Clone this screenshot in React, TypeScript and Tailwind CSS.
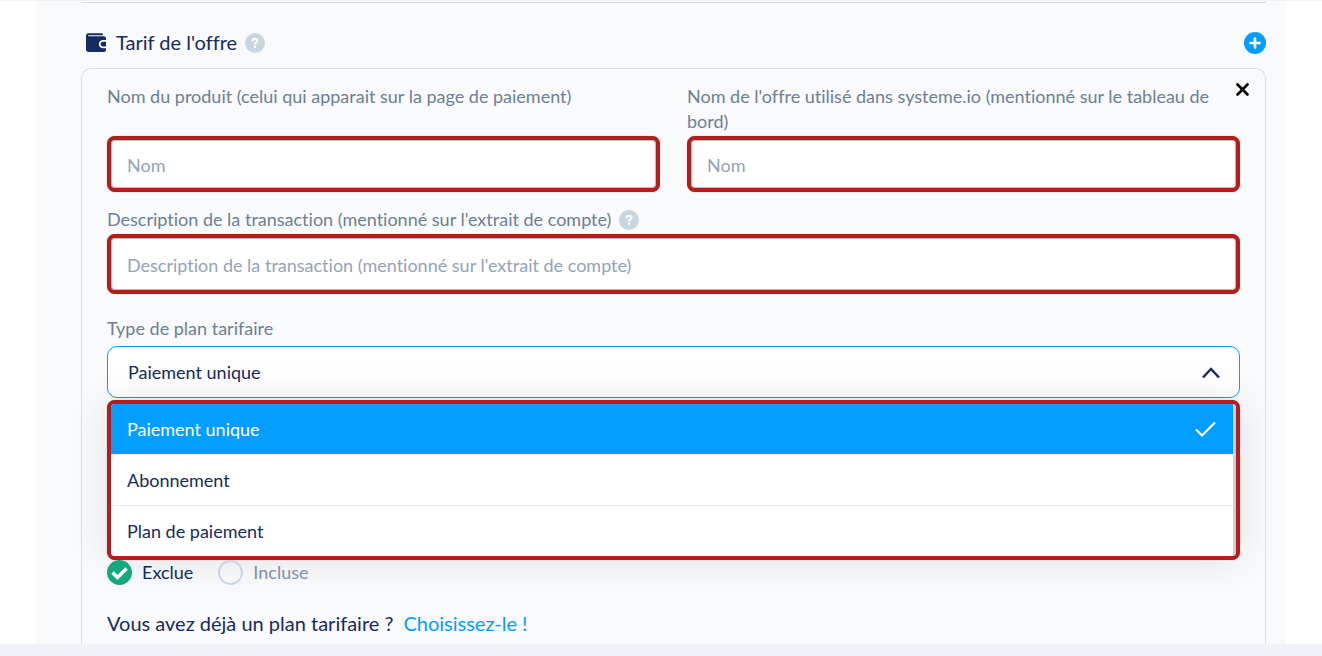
import React from 'react';

interface FieldProps {
  id: string;
  label: string;
  placeholder: string;
  help?: boolean;
  tall?: boolean;
}

const planTypes = ['Paiement unique', 'Abonnement', 'Plan de paiement'];

const HelpIcon: React.FC = () => (
  <button
    type="button"
    aria-label="Aide"
    className="flex size-5 shrink-0 items-center justify-center rounded-full bg-[#cad5e2] text-white"
  >
    <svg viewBox="0 0 20 20" className="size-5" fill="none" stroke="currentColor" strokeWidth="2.2">
      <path d="M7.5 8.1C7.6 6.5 8.6 5.9 10 5.9C11.5 5.9 12.4 6.7 12.4 7.8C12.4 9.4 10 9.3 10 11.4" />
      <circle cx="10" cy="13.8" r="1.3" fill="currentColor" stroke="none" />
    </svg>
  </button>
);

const WalletIcon: React.FC = () => (
  <svg viewBox="0 0 20 19" className="h-[19px] w-5 shrink-0" aria-hidden="true">
    <path
      fill="#152b61"
      d="M2.6.3H15.8C16.6.3 17 .9 17 1.8V2.2H2.2V3.3H17.6C19.2 3.3 20 4 20 5.4V7H17.2C14.6 7 12.8 8.7 12.8 11.1C12.8 13.6 14.6 15.3 17.2 15.3H20V16.8C20 18.2 19.2 18.9 17.6 18.9H2.6C1 18.9 0 18 0 16.4V3C0 1.3 1 .3 2.6.3Z"
    />
    <path fill="#152b61" d="M20 8.8H17.2C15.6 8.8 14.6 9.7 14.6 11.1C14.6 12.6 15.6 13.5 17.2 13.5H20Z" />
  </svg>
);

const Field: React.FC<FieldProps> = ({ id, label, placeholder, help = false, tall = false }) => (
  <div className="flex flex-col justify-between gap-0.5">
    <div className="flex items-center gap-2">
      <label htmlFor={id}>{label}</label>
      {help && <HelpIcon />}
    </div>
    <input
      type="text"
      id={id}
      placeholder={placeholder}
      className={`w-full rounded-lg border-4 border-[#b71c1c] bg-white px-4 pt-0.5 text-[#152b61] shadow-[0_0_1px_rgba(70,80,90,0.8),inset_0_0_1px_1px_rgba(70,80,90,0.4)] placeholder:text-[#94a3b8] focus:outline-none ${
        tall ? 'h-15' : 'h-14'
      }`}
    />
  </div>
);

const App: React.FC = () => {
  const [planType, setPlanType] = React.useState('Paiement unique');
  const [menuOpen, setMenuOpen] = React.useState(true);
  const [tax, setTax] = React.useState('Exclue');

  const toggleMenu = (e: React.MouseEvent) => {
    e.preventDefault();
    setMenuOpen((prev) => !prev);
  };

  const selectPlan = (plan: string) => {
    setPlanType(plan);
    setMenuOpen(false);
  };

  return (
    <div className="min-h-screen bg-[#eff3f8] pt-px pb-3 font-['Lato',sans-serif] text-lg leading-[25px] text-[#6b7f99] [font-variant-ligatures:none]">
      <main className="bg-white px-9">
        <div className="bg-[#f9fafc] pt-px pr-5 pl-[45px]">
          {/* Section header */}
          <header className="flex h-[66px] items-center justify-between border-t border-[#d5dce5] pt-3.5">
            <div className="flex items-center gap-2 pl-[5px]">
              <WalletIcon />
              <h2 className="pl-0.5 text-xl leading-[25px] text-[#152b61]">Tarif de l'offre</h2>
              <HelpIcon />
            </div>
            <button
              type="button"
              aria-label="Ajouter un tarif"
              className="flex size-[22px] items-center justify-center rounded-full bg-[#009fff] text-white"
            >
              <svg viewBox="0 0 22 22" className="size-[22px]" stroke="currentColor" strokeWidth="2.6" strokeLinecap="round">
                <path d="M11 6.5V15.5M6.5 11H15.5" />
              </svg>
            </button>
          </header>

          {/* Price plan card */}
          <section className="relative rounded-t-[10px] border border-b-0 border-[#d9dee4] px-[25px] pt-[15px] pb-2">
            <button type="button" aria-label="Supprimer" className="absolute top-3.5 right-4 text-black">
              <svg viewBox="0 0 13 13" className="size-[13px]" stroke="currentColor" strokeWidth="2.6" strokeLinecap="round">
                <path d="M1.5 1.5L11.5 11.5M11.5 1.5L1.5 11.5" />
              </svg>
            </button>

            <div className="grid grid-cols-2 gap-[27px]">
              <Field
                id="productName"
                label="Nom du produit (celui qui apparait sur la page de paiement)"
                placeholder="Nom"
              />
              <Field
                id="offerName"
                label="Nom de l'offre utilisé dans systeme.io (mentionné sur le tableau de bord)"
                placeholder="Nom"
              />
            </div>

            <div className="mt-[15px]">
              <Field
                id="description"
                label="Description de la transaction (mentionné sur l'extrait de compte)"
                placeholder="Description de la transaction (mentionné sur l'extrait de compte)"
                help
                tall
              />
            </div>

            {/* Plan type */}
            <div className="mt-[22px]">
              <label htmlFor="planType">Type de plan tarifaire</label>
              <div className="relative mt-[5px]">
                <select
                  id="planType"
                  value={planType}
                  onChange={(e) => setPlanType(e.target.value)}
                  onMouseDown={toggleMenu}
                  className="h-[52px] w-full appearance-none rounded-[10px] border border-[#009fff] bg-white px-5 text-[#152b61] focus:outline-none"
                >
                  {planTypes.map((plan) => (
                    <option key={plan}>{plan}</option>
                  ))}
                </select>
                <svg
                  viewBox="0 0 18 12"
                  className="pointer-events-none absolute top-[21px] right-5 h-3 w-[18px]"
                  fill="none"
                  stroke="#152b61"
                  strokeWidth="2.4"
                >
                  <path d="M1 10.5L9 2L17 10.5" />
                </svg>

                {menuOpen && (
                  <ul
                    role="listbox"
                    aria-label="Type de plan tarifaire"
                    className="absolute inset-x-0 top-full mt-0.5 overflow-hidden rounded-lg border-4 border-[#b71c1c] bg-white shadow-[0_0_1px_rgba(70,80,90,0.8),0_0_40px_rgba(0,0,0,0.1)]"
                  >
                    {planTypes.map((plan) => (
                      <li
                        key={plan}
                        role="option"
                        aria-selected={plan === planType}
                        className="border-r-3 border-b border-r-[#c3d1de] border-b-[#e4e9ec] last:border-b-0"
                      >
                        <button
                          type="button"
                          onClick={() => selectPlan(plan)}
                          className={`flex h-[50px] w-full items-center justify-between px-4 text-left ${
                            plan === planType ? 'bg-[#009fff] text-white' : 'bg-white text-[#152b61]'
                          }`}
                        >
                          {plan}
                          {plan === planType && (
                            <svg viewBox="0 0 22 17" className="h-[17px] w-[22px]" fill="none" stroke="currentColor" strokeWidth="2.2">
                              <path d="M1 8.5L7 14.5L20 1.5" />
                            </svg>
                          )}
                        </button>
                      </li>
                    ))}
                  </ul>
                )}
              </div>
            </div>

            {/* Tax mode */}
            <div className="mt-[162px] flex gap-[25px]">
              {['Exclue', 'Incluse'].map((mode) => (
                <label
                  key={mode}
                  className={`flex items-center gap-2.5 ${tax === mode ? 'text-[#152b61]' : 'text-[#8494b0]'}`}
                >
                  <span className="relative flex">
                    <input
                      type="radio"
                      name="tax"
                      value={mode}
                      checked={tax === mode}
                      onChange={() => setTax(mode)}
                      className="size-[25px] appearance-none rounded-full border-2 border-[#cad5e2] checked:border-[#14a97f] checked:bg-[#14a97f]"
                    />
                    {tax === mode && (
                      <svg
                        viewBox="0 0 25 25"
                        className="pointer-events-none absolute inset-0"
                        fill="none"
                        stroke="white"
                        strokeWidth="3.4"
                      >
                        <path d="M5.5 12.5L10.5 17.5L19.5 8.5" />
                      </svg>
                    )}
                  </span>
                  {mode}
                </label>
              ))}
            </div>

            <p className="mt-[26px] text-xl leading-[25px] text-[#152b61]">
              Vous avez déjà un plan tarifaire ?
              <a href="#plans" className="ml-2.5 text-[#009fff]">
                Choisissez-le !
              </a>
            </p>
          </section>
        </div>
      </main>
    </div>
  );
};

export default App;
